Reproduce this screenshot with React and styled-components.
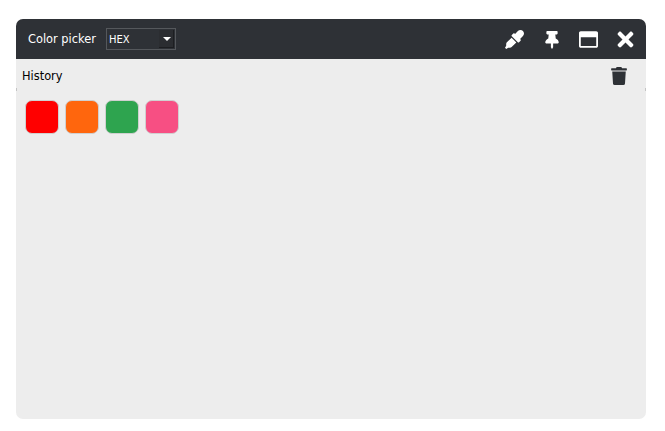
import styled, { createGlobalStyle } from "styled-components";
import { FaEyeDropper, FaThumbtack, FaRegWindowMaximize, FaTimes, FaTrash } from "react-icons/fa";

const GlobalStyle = createGlobalStyle`
    html, body {
        margin: 0;
        background: #ffffff;
    }
`

const colors = ["#ff0000", "#ff660d", "#2ea44f", "#f74f83"]

function App() {
    return (
        <Page>
            <GlobalStyle />
            <Picker>
                <TitleBar>
                    <Title>Color picker</Title>
                    <FormatSelect>
                        <span>HEX</span>
                        <SelectArrow><i /></SelectArrow>
                    </FormatSelect>
                    <Tools>
                        <ToolButton><FaEyeDropper size={19} /></ToolButton>
                        <ToolButton><FaThumbtack size={18} /></ToolButton>
                        <ToolButton><FaRegWindowMaximize size={19} /></ToolButton>
                        <ToolButton><FaTimes size={23} /></ToolButton>
                    </Tools>
                </TitleBar>
                <HistoryHeader>
                    <p>History</p>
                    <TrashButton><FaTrash size={18} /></TrashButton>
                </HistoryHeader>
                <Swatches>
                    {colors.map((color) => <Swatch key={color} color={color} />)}
                </Swatches>
            </Picker>
        </Page>
    )
}

export default App

const Page = styled.div`
    width: 665px;
    height: 431px;
    padding: 19px 19px 12px 16px;
    box-sizing: border-box;
`

const Picker = styled.div`
    width: 630px;
    height: 400px;
    background: #ededed;
    border-radius: 7px;
    overflow: hidden;
    font-family: "DejaVu Sans", sans-serif;
`

const TitleBar = styled.div`
    height: 40px;
    background: #2e3136;
    display: flex;
    align-items: center;
    padding-left: 12px;
`

const Title = styled.div`
    color: #ffffff;
    font-size: 11.4px;
    width: 78px;
`

const FormatSelect = styled.div`
    width: 70px;
    height: 22px;
    box-sizing: border-box;
    border: 1px solid #55585c;
    display: flex;
    align-items: center;
    justify-content: space-between;
    color: #ffffff;
    font-size: 10px;
    padding-left: 2px;
`

const SelectArrow = styled.div`
    width: 15px;
    height: 18px;
    margin-right: 1px;
    background: #2b2d31;
    box-shadow: inset -1px -1px 0 #1d1e21;
    display: flex;
    align-items: center;
    justify-content: center;
    i {
        width: 0;
        height: 0;
        border-left: 4px solid transparent;
        border-right: 4px solid transparent;
        border-top: 4px solid #ffffff;
    }
`

const Tools = styled.div`
    margin-left: auto;
    display: flex;
    align-items: center;
    margin-right: 2px;
    padding-top: 1px;
`

const ToolButton = styled.div`
    width: 37px;
    display: flex;
    justify-content: center;
    color: #ffffff;
`

const HistoryHeader = styled.div`
    position: relative;
    height: 34px;
    display: flex;
    align-items: center;
    justify-content: space-between;
    padding: 0 18px 0 6px;
    p {
        margin: 0;
        font-size: 11.4px;
        color: #000000;
    }
    &::before, &::after {
        content: "";
        position: absolute;
        top: 29px;
        width: 1px;
        height: 3px;
        background: #c4c4c4;
    }
    &::before {
        left: 0;
    }
    &::after {
        right: 0;
    }
`

const TrashButton = styled.div`
    display: flex;
    color: #2e3136;
`

const Swatches = styled.div`
    display: flex;
    gap: 6px;
    padding: 7px 0 0 9px;
`

const Swatch = styled.div`
    width: 34px;
    height: 34px;
    box-sizing: border-box;
    border: 1px solid #d0d0d0;
    border-radius: 7px;
    background: ${props => props.color};
`
